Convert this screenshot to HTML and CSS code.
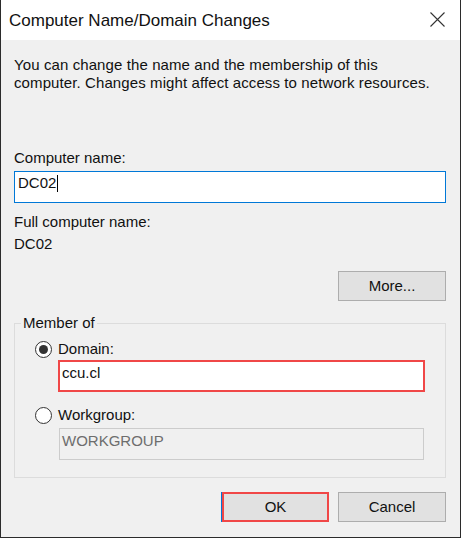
FILE: index.html
```html
<!DOCTYPE html>
<html lang="en">
<head>
<meta charset="utf-8">
<title>Computer Name/Domain Changes</title>
<link rel="stylesheet" href="styles.css">
</head>
<body>
<div class="window">
  <div class="titlebar">
    <span class="title">Computer Name/Domain Changes</span>
    <svg class="close" width="15" height="15" viewBox="0 0 15 15" aria-label="Close">
      <path d="M0.5 0.5 L14.5 14.5 M14.5 0.5 L0.5 14.5" stroke="#333" stroke-width="1.1" fill="none"/>
    </svg>
  </div>
  <div class="content">
    <p class="desc">You can change the name and the membership of this<br>computer. Changes might affect access to network resources.</p>
    <div class="label label-name">Computer name:</div>
    <div class="field field-focus">DC02<span class="caret"></span></div>
    <div class="label label-full">Full computer name:</div>
    <div class="label label-value">DC02</div>
    <div class="more-row"><button class="btn">More...</button></div>
    <fieldset class="group">
      <legend class="legend">Member of</legend>
      <div class="radio-row first">
        <span class="radio checked"></span><span class="radio-label">Domain:</span>
      </div>
      <div class="field field-domain">ccu.cl</div>
      <div class="radio-row second">
        <span class="radio"></span><span class="radio-label">Workgroup:</span>
      </div>
      <div class="field field-disabled">WORKGROUP</div>
    </fieldset>
    <div class="actions">
      <button class="btn btn-ok">OK</button>
      <button class="btn">Cancel</button>
    </div>
  </div>
</div>
</body>
</html>
```
FILE: styles.css
```css
html, body {
  margin: 0;
  padding: 0;
  background: #f0f0f0;
}
.window {
  width: 461px;
  height: 538px;
  box-sizing: border-box;
  border-left: 1px solid #2b2b2b;
  border-right: 1px solid #2b2b2b;
  border-bottom: 1px solid #2b2b2b;
  font-family: "Liberation Sans", Arial, sans-serif;
  font-size: 15px;
  line-height: 18px;
  color: #111;
  display: flex;
  flex-direction: column;
  background: #f0f0f0;
}
.titlebar {
  height: 40px;
  box-sizing: border-box;
  background: #fff;
  display: flex;
  align-items: flex-start;
  padding: 11px 15px 0 8px;
}
.title {
  font-size: 17px;
  line-height: 20px;
  color: #111;
}
.close {
  margin-left: auto;
  margin-top: 1px;
}
.content {
  flex: 1;
  display: flex;
  flex-direction: column;
  padding: 16px 14px 15px 13px;
}
.desc {
  margin: 0;
  letter-spacing: 0.1px;
}
.label-name { margin-top: 57px; }
.label-full { margin-top: 10px; }
.label-value { margin-top: 4px; }
.field {
  box-sizing: border-box;
  height: 32px;
  background: #fff;
  border: 1px solid #7a7a7a;
  padding: 2px 3px;
  white-space: nowrap;
}
.field-focus {
  margin-top: 4px;
  border-color: #0078d7;
}
.caret {
  display: inline-block;
  width: 1px;
  height: 17px;
  background: #000;
  vertical-align: -4px;
  margin-left: 1px;
}
.more-row {
  margin-top: 18px;
  display: flex;
  justify-content: flex-end;
}
.btn {
  box-sizing: border-box;
  width: 108px;
  height: 30px;
  background: #e1e1e1;
  border: 1px solid #adadad;
  font-family: "Liberation Sans", Arial, sans-serif;
  font-size: 15px;
  line-height: 18px;
  color: #111;
  padding: 0;
  margin: 0;
}
.group {
  margin: 13px 0 0 0;
  padding: 8px 0 17px 0;
  border: 1px solid #dcdcdc;
  min-width: 0;
}
.legend {
  padding: 0 2px;
  margin-left: 6px;
  line-height: 18px;
}
.radio-row {
  display: flex;
  align-items: center;
  height: 18px;
  margin-left: 20px;
}
.second { margin-top: 14px; }
.radio {
  box-sizing: border-box;
  width: 17px;
  height: 17px;
  border: 1px solid #333;
  border-radius: 50%;
  background: #fff;
  margin-right: 6px;
  display: flex;
  align-items: center;
  justify-content: center;
}
.radio.checked::after {
  content: "";
  width: 9px;
  height: 9px;
  border-radius: 50%;
  background: #333;
}
.field-domain {
  margin: 2px 0 0 43px;
  width: 367px;
  border: 2px solid #f04747;
  padding: 2px 2px;
}
.field-disabled {
  margin: 4px 0 0 44px;
  width: 365px;
  background: #f0f0f0;
  border-color: #cccccc;
  color: #6d6d6d;
  padding: 3px 2px;
}
.actions {
  margin-top: 14px;
  display: flex;
  justify-content: flex-end;
  gap: 9px;
}
.btn-ok {
  width: 107px;
  border: 2px solid #f04747;
  box-shadow: -1px 0 0 #0078d7;
}
```
